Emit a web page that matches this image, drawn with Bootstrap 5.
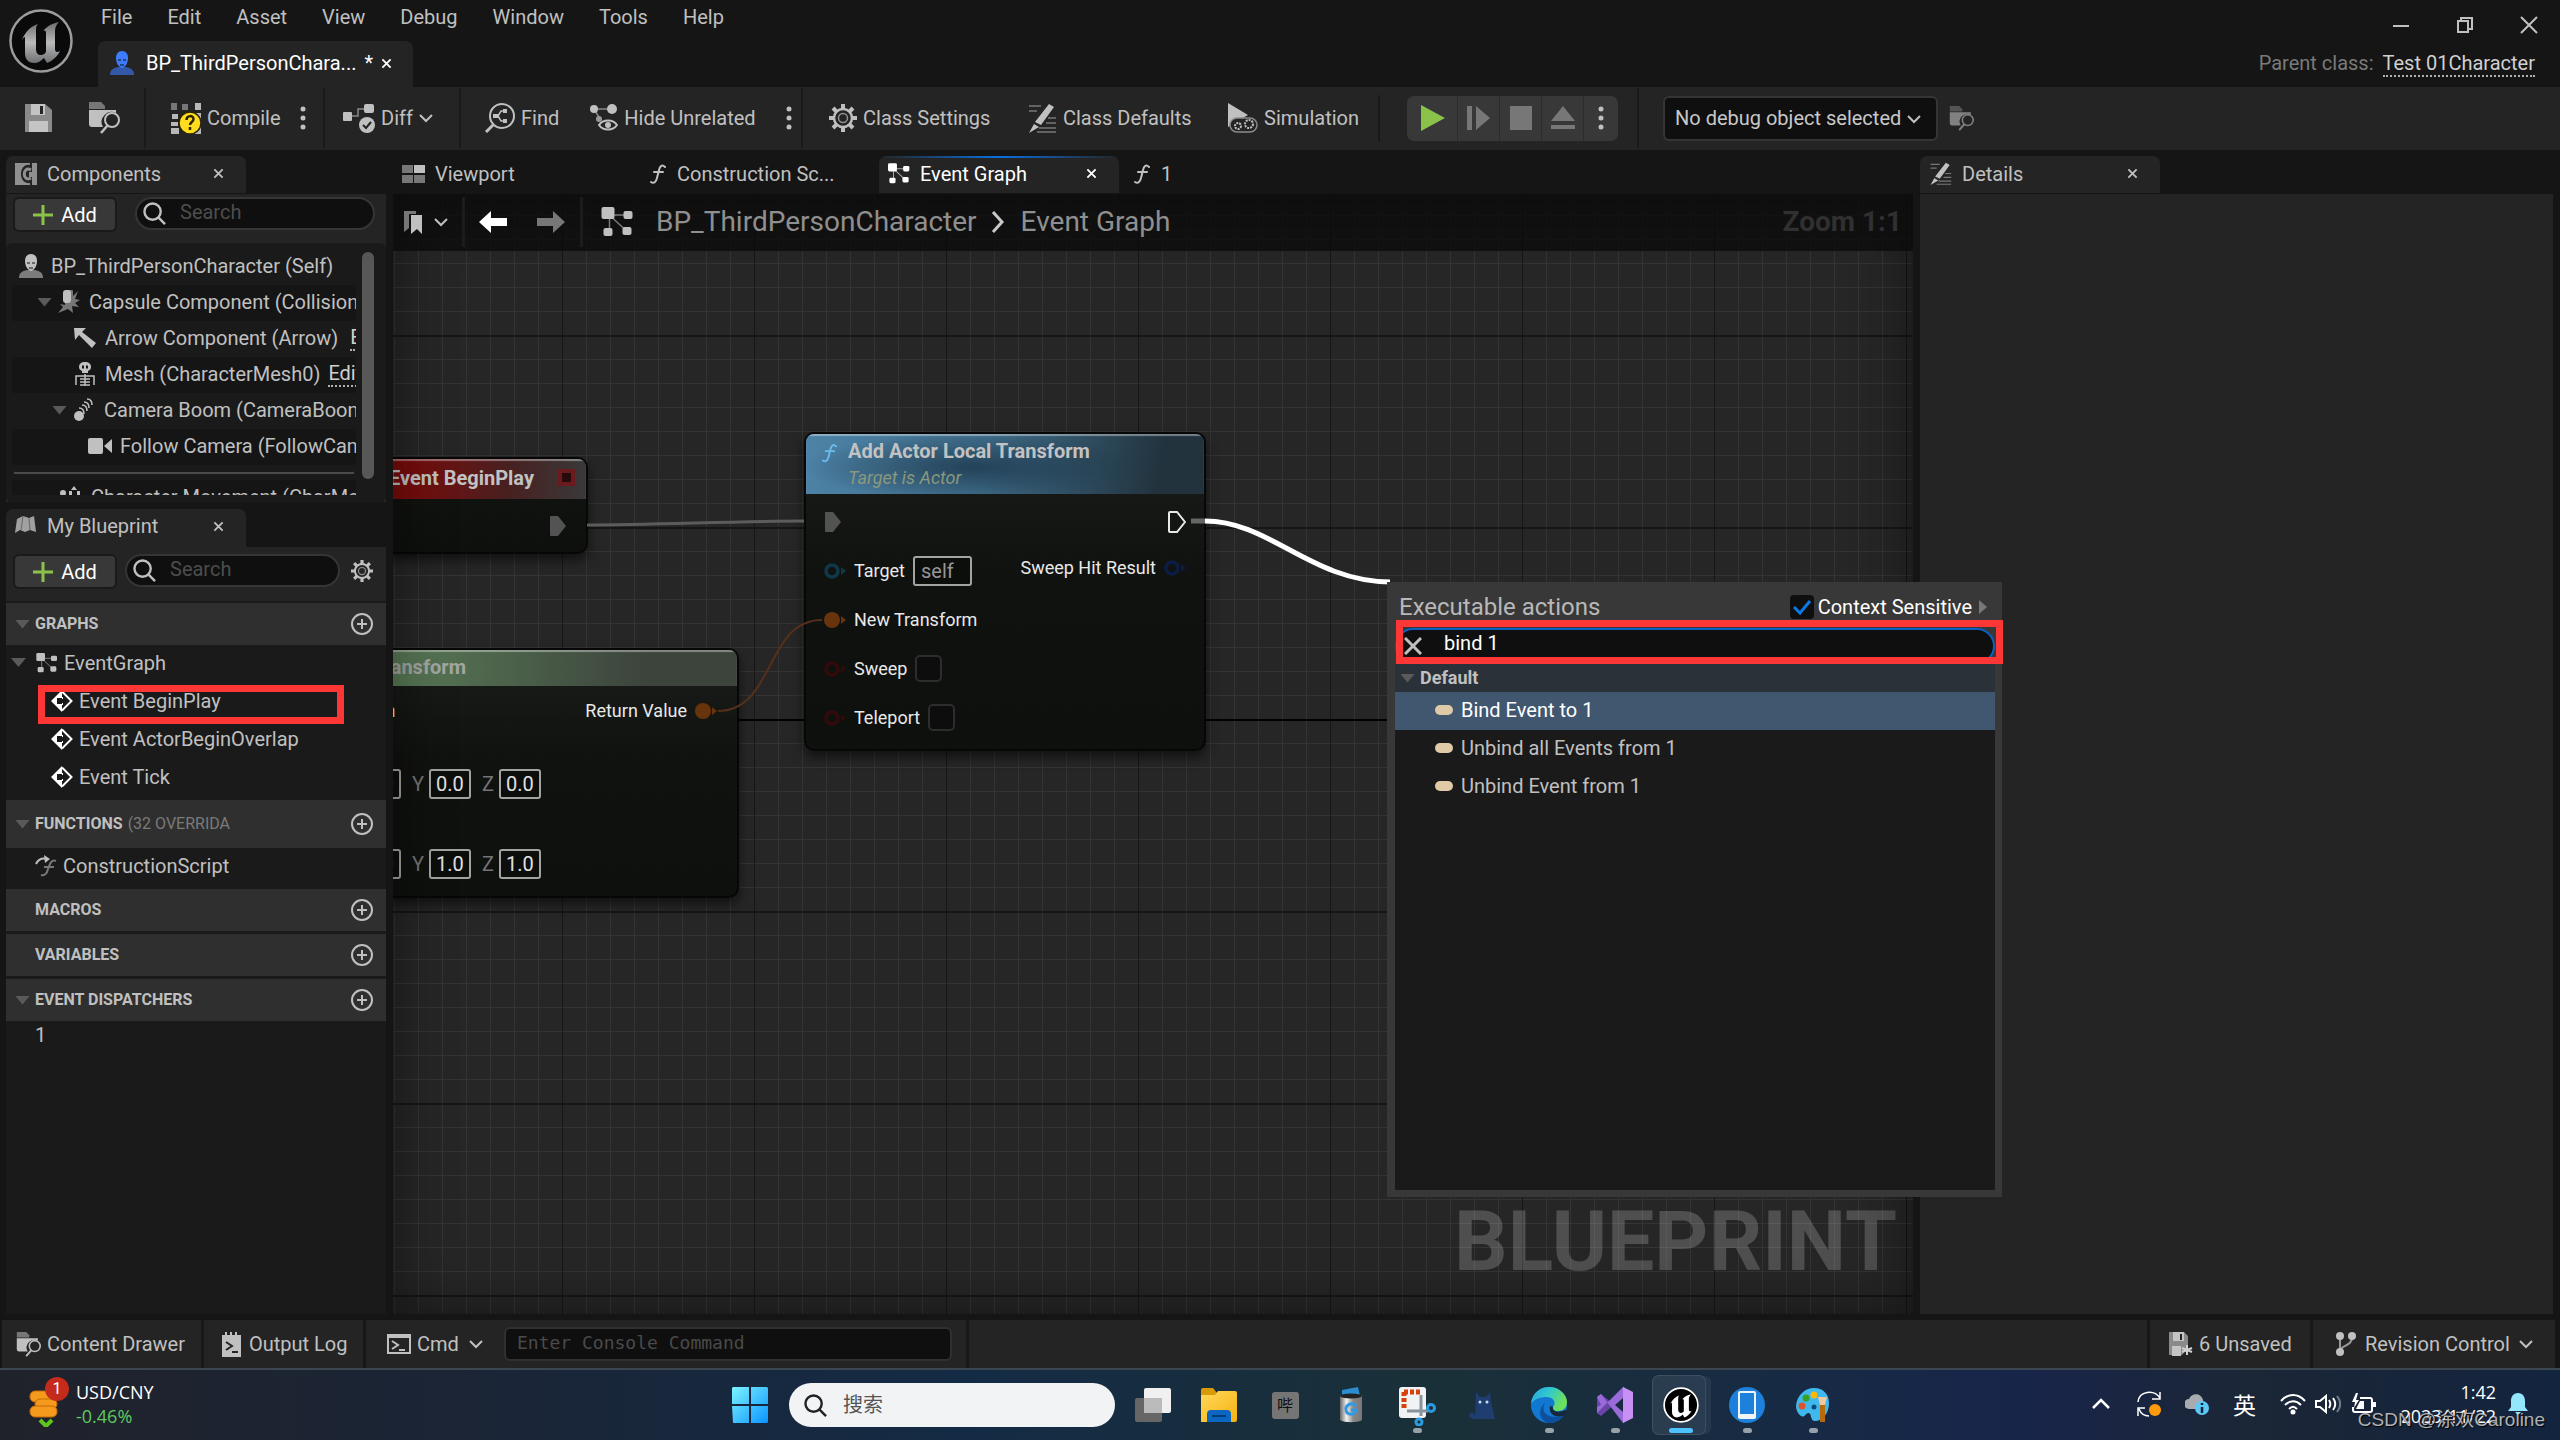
<!DOCTYPE html>
<html lang="en">
<head>
<meta charset="utf-8">
<meta name="viewport" content="width=device-width, initial-scale=1">
<title>BP_ThirdPersonCharacter</title>
<link rel="stylesheet" href="https://cdn.jsdelivr.net/npm/bootstrap@5.3.0/dist/css/bootstrap.min.css">
<script src="https://cdn.jsdelivr.net/npm/bootstrap@5.3.0/dist/js/bootstrap.bundle.min.js"></script>
<style>
body{font-family:Roboto,"Noto Sans CJK SC",sans-serif;font-size:20px;line-height:24px;background:#151515;color:#c0c0c0;min-height:100vh;overflow:hidden}
svg{display:block;flex:none}
button{background:none;border:0;padding:0;color:inherit;white-space:nowrap}
.nowrap{white-space:nowrap}
.tbtn{display:flex;align-items:center;gap:6px}
/* title bar */
.titlebar{height:87px}
.brand{padding:9px 25px 0 9px}
.menus{gap:35px;padding:5px 0 0 3px;height:41px}
.menus button{height:24px}
.apptab{width:315px;height:46px;background:#242424;border-radius:7px 7px 0 0;color:#fff;padding:0 20px 2px 12px;gap:8px}
.wctl{gap:46px;padding:16px 22px 0 0;height:51px}
.parentcls{padding-right:25px;gap:9px;color:#7a7a7a}
.parentcls a,.editlink{color:#d0d0d0;text-decoration:none;border-bottom:2px dotted #b0b0b0}
/* toolbar */
.toolbar{height:63px;background:#242424}
.tgroup{display:flex;align-items:center;justify-content:space-between;border-right:2px solid #1a1a1a;margin:1px 0 2px}
.playset{width:211px;height:45px;background:#383838;border-radius:7px;overflow:hidden}
.playset button{flex:1;height:45px;display:flex;align-items:center;justify-content:center;border-right:1px solid #2c2c2c}
.playset button:first-child{flex:0 0 51px}
.playset button:last-child{border:0;flex:0 0 34px}
.dbgsel{width:275px;height:45px;background:#0f0f0f url("data:image/svg+xml,%3Csvg xmlns='http://www.w3.org/2000/svg' width='14' height='14'%3E%3Cpath d='M1 4l6 6 6-6' fill='none' stroke='%23c0c0c0' stroke-width='2'/%3E%3C/svg%3E") no-repeat right 15px center;border:2px solid #353535;border-radius:6px;color:#c8c8c8;padding:0 0 2px 10px;appearance:none}
/* docked tabs */
.dtab{height:37px;display:flex;align-items:center;gap:10px;padding:0 22px 2px 9px}
.dtab.on{background:#242424;border-radius:7px 7px 0 0}
.dtab.cur{color:#fff;background:linear-gradient(90deg,#242424,#0a6fe0 50%,#242424) top/100% 2px no-repeat #242424}
.cross{margin-left:auto}
.leftcol{width:393px;padding:6px 7px 6px 6px}
.graphcol{min-width:0;padding:6px 0}
.rightcol{width:647px;padding:6px 7px 6px 7px}
.panelbody{background:#242424}
.addbtn{width:104px;height:35px;flex:none;background:#383838;border:2px solid #1a1a1a;border-radius:6px;color:#fff;display:flex;align-items:center;justify-content:center;gap:8px}
.searchbox{height:33px;min-width:0;background:#0f0f0f;border:2px solid #353535;border-radius:17px;padding:0 10px 0 6px;display:flex;align-items:center;gap:14px}
.searchbox input{background:none;border:0;outline:0;color:#fff;min-width:0;width:0;flex:1;padding:0 0 4px}
.searchbox input::placeholder{color:#4d4d4d;opacity:1}
.treebox{height:259px;background:#1a1a1a;border-radius:6px;padding:6px 12px 7px 6px;gap:6px}
.treelist{overflow:hidden;width:344px}
.trow{height:36px;display:flex;align-items:center;white-space:nowrap;gap:8px;padding-bottom:2px}
.trow.alt{background:#151515}
.ind0{padding-left:6px}.ind1{padding-left:25px}.ind2{padding-left:60px}.ind3{padding-left:75px}.ind2b{padding-left:40px}
.trow .ic{width:25px;display:flex;justify-content:center;flex:none}
.tsep{height:2px;background:#4a4a4a;margin:7px 2px 6px}
.vbar{width:12px;height:227px;margin-top:3px;background:#575757;border-radius:6px}
.bphead{height:42px;background:#2f2f2f;display:flex;align-items:center;padding:0 13px 0 9px;gap:5px;font-size:16px;font-weight:700;text-transform:uppercase;margin-bottom:3px;white-space:nowrap}
.bphead.tight{margin-bottom:0}
.bphead .soft{font-weight:400;color:#7a7a7a}
.bphead button{margin-left:auto}
.tri{width:15px;height:9px;background:#5a5a5a;clip-path:polygon(0 0,100% 0,50% 100%);flex:none}
.tri.off{visibility:hidden}
.bprow{height:38px;display:flex;align-items:center;gap:6px;white-space:nowrap;padding-bottom:3px}
.bparea{background:#1a1a1a;padding-top:2px}
.redmark{position:absolute;border:7px solid #fc3735}
/* graph canvas */
.canvas{position:relative;overflow:hidden;background-color:#262626;
 background-image:linear-gradient(#161616 2px,transparent 2px),linear-gradient(90deg,#161616 1px,transparent 1px),linear-gradient(#343434 1px,transparent 1px),linear-gradient(90deg,#343434 1px,transparent 1px);
 background-size:192px 192px,192px 192px,24px 24px,24px 24px;background-position:0 141px,169px 0,0 21px,1px 0}
.canvas::after{content:"";position:absolute;inset:0;box-shadow:inset 0 0 60px rgba(0,0,0,.45);pointer-events:none}
.originline{position:absolute;left:0;right:0;top:525px;height:2px;background:#000}
.crumbs{position:absolute;left:0;right:0;top:0;height:57px;background:rgba(10,10,10,.78);z-index:2;color:#8f8f8f;font-size:28px;line-height:32px;padding:0 11px 2px 11px}
.crumbs .vsep{width:3px;height:50px;background:#1c1c1c}
.zoomtxt{font-size:28px;font-weight:700;color:#303030}
.bigmark{position:absolute;right:16px;bottom:16px;font-size:84px;line-height:112px;font-weight:700;color:#fff;opacity:.19}
.wires{position:absolute;left:0;top:0}
.gnode{position:absolute;border:2px solid #060606;border-radius:10px;background:linear-gradient(#1b1d1a,#10120f 45%,#0e100d);box-shadow:0 6px 12px rgba(0,0,0,.55);overflow:hidden;color:#f0f0f0;font-size:18px;opacity:.97}
.ghead{font-size:20px;font-weight:700;color:#c8c8c8;box-shadow:inset 0 2px 1px rgba(255,255,255,.4)}
.gh-red{background:linear-gradient(90deg,#7c0c0c 55%,#4a2020 80%,#3a3a3a);height:40px;padding-bottom:3px}
.gh-green{background:linear-gradient(90deg,#5b8358,#5d805a 40%,#3d453d 85%);height:36px;color:#a8aca6;padding-bottom:2px}
.gh-blue{background:radial-gradient(ellipse 170px 34px at 42% 55%,rgba(26,52,72,.75),transparent),linear-gradient(100deg,#4f86ab 0%,#41718f 45%,#22343f 88%);height:60px;line-height:24px}
.gh-blue em{display:block;font-size:18px;font-weight:400;color:#8f9c80;line-height:30px}
.prow{height:49px;display:flex;align-items:center;gap:8px;white-space:nowrap}
.numbox{height:30px;width:42px;background:#0c0e0b;border:2px solid #a8a8a8;border-radius:3px;color:#e8e8e8;padding:0;text-align:center;font-size:20px}
.selfbox{width:59px;color:#9a9a9a;text-align:left;padding-left:6px}
.gcheck{appearance:none;width:27px;height:27px;background:#0d0d0d;border:2px solid #2e2e2e;border-radius:5px;margin:0}
.axis{color:#777;font-size:20px;width:28px;padding-left:11px}
/* action menu */
.actmenu{position:absolute;left:1387px;top:432px;width:615px;height:615px;background:#383838;padding:10px 7px 7px 8px;z-index:3}
.amtitle{font-size:24px;line-height:30px;color:#b8b8b8}
.amhead{height:30px;padding:0 8px 0 4px}
.ctx{appearance:none;width:24px;height:24px;margin:0;border-radius:4px;background:#0f0f0f url("data:image/svg+xml,%3Csvg xmlns='http://www.w3.org/2000/svg' width='24' height='24'%3E%3Cpath d='M4 12l6 6L20 6' fill='none' stroke='%230a78e8' stroke-width='3'/%3E%3C/svg%3E") center no-repeat}
.amsearch{height:36px;margin-top:6px;border:2px solid #0a5fc0;border-radius:18px;background:#0f0f0f;padding-left:7px;gap:22px}
.amsearch input{background:none;border:0;outline:0;color:#fff;flex:1;padding:0 0 6px}
.amlist{background:#1a1a1a;flex:1}
.amgroup{height:28px;background:#2b3138;padding-left:5px;gap:5px;font-size:18px;font-weight:700}
.amitem{height:38px;width:100%;padding:0 0 2px 40px;gap:8px;text-align:left}
.amitem.sel{background:#41576f;color:#fff}
.pill{width:18px;height:10px;border-radius:5px;background:#e0c9a6}
/* status bar */
.statusbar{height:48px;background:#242424;margin:0 5px 0 2px}
.sseg{display:flex;align-items:center;border-right:3px solid #181818}
.cmdbox{width:448px;height:34px;background:#0f0f0f;border:2px solid #303030;border-radius:6px;font:18px "DejaVu Sans Mono",monospace;color:#fff;padding:0 0 4px 11px}
.cmdbox::placeholder{color:#4a4a4a;opacity:1}
/* windows task bar */
.taskbar{height:72px;border-top:2px solid #3c4650;background:linear-gradient(90deg,#20222b 0%,#1a2537 20%,#142b45 38%,#1a3038 56%,#172a44 70%,#18254a 79%,#1b2636 88%,#13243f 100%);font-family:"Open Sans","Noto Sans CJK SC",sans-serif;font-size:18px;color:#fff}
.widget{width:732px;padding:0 0 2px 28px;gap:14px}
.winsearch{width:326px;height:44px;border-radius:22px;background:#f2f3f5;margin:0 5px 0 21px;padding-left:15px;gap:16px}
.winsearch input{border:0;background:none;outline:0;font-size:20px;width:240px;padding:0;color:#444}
.winsearch input::placeholder{color:#555;opacity:1}
.tapp{width:66px;height:70px;display:flex;align-items:center;justify-content:center;position:relative}
.tapp.run::after,.tapp.act::after{content:"";position:absolute;bottom:7px;width:9px;height:5px;border-radius:3px;background:#98a0a8}
.tapp.act::after{width:24px;background:#4cc2ff}
.tapp.act::before{content:"";position:absolute;left:4px;top:5px;width:54px;height:60px;border-radius:7px;background:rgba(255,255,255,.08);border:1px solid rgba(255,255,255,.1);box-shadow:6px 0 0 -1px rgba(255,255,255,.06)}
.tray{padding:0 32px 3px 0}
.clock{width:100px;text-align:right;line-height:24px;font-size:18px}
.wmark{position:absolute;right:15px;bottom:7px;font-family:"Liberation Sans","Noto Sans CJK SC",sans-serif;font-size:19px;line-height:26px;color:rgba(230,230,230,.75);text-shadow:1px 1px 1px #000}
</style>
</head>
<body class="d-flex flex-column position-relative">
<svg width="0" height="0" class="position-absolute" aria-hidden="true">
<defs>
<symbol id="i-x" viewBox="0 0 12 12"><path d="M1.500 1.500l9 9M10.500 1.500l-9 9" stroke="currentColor" stroke-width="2" fill="none"/></symbol>
<symbol id="i-chev" viewBox="0 0 14 14"><path d="M1 4l6 6 6-6" stroke="currentColor" stroke-width="2" fill="none"/></symbol>
<symbol id="i-dots" viewBox="0 0 6 24"><g fill="currentColor"><circle cx="3" cy="3" r="2.500"/><circle cx="3" cy="12" r="2.500"/><circle cx="3" cy="21" r="2.500"/></g></symbol>
<symbol id="i-save" viewBox="0 0 28 28"><path d="M1 0h20l7 6v22H1z" fill="#8a8a8a"/><path d="M7 0h14v11H7zM5 17h19v11H5z" fill="#c4c4c4"/><path d="M16 2h3v8h-3z" fill="#242424"/></symbol>
<symbol id="i-browse" viewBox="0 0 32 32"><path d="M1 0h12l4 4v3H1z" fill="#777"/><path d="M1 8h27v3a10 10 0 0 0-13 14H4a3 3 0 0 1-3-3z" fill="#c0c0c0"/><circle cx="24" cy="18" r="7" fill="none" stroke="currentColor" stroke-width="2"/><path d="M20 23l-7 8" stroke="currentColor" stroke-width="2.500"/></symbol>
<symbol id="i-f" viewBox="0 0 18 20"><path d="M16 3c-3-3-5-1-6 3L8 14c-1 4-3 6-6 4M5 8h9" fill="none" stroke="currentColor" stroke-width="2" stroke-linecap="round"/></symbol>
<symbol id="i-graph" viewBox="0 0 32 30"><path d="M8 8h20M8 8v18M10 10l15 14" stroke="currentColor" stroke-width="1.500" opacity=".6"/><g fill="currentColor"><rect width="13" height="12" rx="2"/><rect x="22" y="4" width="9" height="8" rx="2"/><rect x="2" y="21" width="9" height="8" rx="2"/><rect x="21" y="20" width="9" height="8" rx="2"/></g></symbol>
<symbol id="i-search" viewBox="0 0 24 24"><circle cx="10" cy="10" r="8.500" fill="none" stroke="currentColor" stroke-width="2.500"/><path d="M16 16l7 7" stroke="currentColor" stroke-width="2.500"/></symbol>
<symbol id="i-gear" viewBox="0 0 28 28"><circle cx="14" cy="14" r="9" fill="none" stroke="currentColor" stroke-width="2.500"/><circle cx="14" cy="14" r="4.500" fill="none" stroke="currentColor" stroke-width="1.500" opacity=".7"/><g stroke="currentColor" stroke-width="4"><path d="M14 0v5M14 23v5M0 14h5M23 14h5M4 4l4 4M20 20l4 4M4 24l4-4M20 8l4-4"/></g></symbol>
<symbol id="i-pencil" viewBox="0 0 30 30"><path d="M2 3h12M2 8h8M21 15h8M19 20h10M12 25h17M10 29h19" stroke="#777" stroke-width="1.500"/><path d="M22 1l5 3L14 22l-6-3zM7 21l5 3-10 6z" fill="currentColor"/></symbol>
<symbol id="i-plus" viewBox="0 0 20 20"><path d="M10 0v20M0 10h20" stroke="#8bc34a" stroke-width="3"/></symbol>
<symbol id="i-circ" viewBox="0 0 22 22"><circle cx="11" cy="11" r="10" fill="none" stroke="currentColor" stroke-width="2"/><path d="M11 6v10M6 11h10" stroke="currentColor" stroke-width="2"/></symbol>
<symbol id="i-person" viewBox="0 0 24 24"><path d="M0 24c0-6 4-7 8-8h8c4 1 8 2 8 8z" fill="currentColor" opacity=".6"/><path d="M12 0c4 0 6 3 6 7s-2 9-6 10c-4-1-6-6-6-10s2-7 6-7z" fill="currentColor"/><path d="M8 9h3M13 9h3M10 14h4" stroke="#111" stroke-width="1"/></symbol>
<symbol id="i-event" viewBox="0 0 22 22"><path d="M11 0L0 11l11 11v-6H11v-2H6V8h5V0z" fill="#fff"/><path d="M11 1.500l9.500 9.500-9.500 9.500M11 8h1l3 3-3 3h-1" fill="none" stroke="#fff" stroke-width="2"/><path d="M7 9h5V6l5 5-5 5v-3H7z" fill="#1a1a1a"/></symbol>
<symbol id="i-exec" viewBox="0 0 18 22"><path d="M2 1h7l8 10-8 10H2a1 1 0 0 1-1-1V2a1 1 0 0 1 1-1z"/></symbol>
<symbol id="i-pin" viewBox="0 0 22 18"><circle cx="8" cy="9" r="6" fill="none" stroke="currentColor" stroke-width="3.500"/><path d="M17 5l5 4-5 4z" fill="currentColor"/></symbol>
<symbol id="i-pinf" viewBox="0 0 22 18"><circle cx="8" cy="9" r="8" fill="currentColor"/><path d="M17 5l5 4-5 4z" fill="currentColor"/></symbol>
<symbol id="i-u" viewBox="0 0 64 64"><path d="M13 31c3-8 9-14 16-16-2 2-2 4-2 6v19c0 4 2 6 5 6 2 0 4-1 5-3V24c0-2-1-3-3-2 4-5 10-8 16-9-3 3-4 6-4 9v18c0 3 2 4 5 2-3 6-8 10-13 12l-3-5c-3 3-6 5-10 5-6 0-9-4-9-10V28c-1 0-2 1-3 3z"/></symbol>
<linearGradient id="ug" x1="0" y1="0" x2="0" y2="1"><stop offset="0" stop-color="#6a6c6e"/><stop offset=".5" stop-color="#b8babc"/><stop offset="1" stop-color="#6e7072"/></linearGradient>
<linearGradient id="wg" x1="0" y1="0" x2="1" y2="1"><stop offset="0" stop-color="#7df3ff"/><stop offset="1" stop-color="#0a94ff"/></linearGradient>
<linearGradient id="eg" x1="0" y1="0" x2="1" y2=".4"><stop offset="0" stop-color="#2a9fe0"/><stop offset=".5" stop-color="#30c8d0"/><stop offset="1" stop-color="#6ee05a"/></linearGradient>
<linearGradient id="fg" x1="0" y1="0" x2="1" y2="1"><stop offset="0" stop-color="#ffd95a"/><stop offset="1" stop-color="#f5b112"/></linearGradient>
<linearGradient id="cg" x1="0" y1="0" x2="1" y2="0"><stop offset="0" stop-color="#666"/><stop offset=".3" stop-color="#f2f2f2"/><stop offset=".6" stop-color="#888"/><stop offset="1" stop-color="#777"/></linearGradient>
</defs>
</svg>

<header class="titlebar d-flex">
  <div class="brand"><svg width="64" height="64" viewBox="0 0 64 64"><circle cx="32" cy="32" r="30.500" fill="#0a0a0a" stroke="#9a9c9e" stroke-width="2.500"/><use href="#i-u" width="64" height="64" fill="url(#ug)"/></svg></div>
  <div>
    <nav class="menus d-flex" aria-label="Main menu"><button>File</button><button>Edit</button><button>Asset</button><button>View</button><button>Debug</button><button>Window</button><button>Tools</button><button>Help</button></nav>
    <div class="apptab d-flex align-items-center"><svg width="24" height="24" class="me-1" style="color:#3d7bff"><use href="#i-person"/></svg><span class="nowrap">BP_ThirdPersonChara...</span><span>*</span><button aria-label="Close tab"><svg width="11" height="11"><use href="#i-x"/></svg></button></div>
  </div>
  <div class="ms-auto d-flex flex-column align-items-end">
    <div class="wctl d-flex align-items-start">
      <button aria-label="Minimize"><svg width="18" height="18"><path d="M1 10h16" stroke="#c0c0c0" stroke-width="2"/></svg></button>
      <button aria-label="Restore"><svg width="18" height="18" fill="none" stroke="#c0c0c0" stroke-width="2"><path d="M2 5h10v11H2zM5 5V2h11v11h-4"/></svg></button>
      <button aria-label="Close"><svg width="18" height="18" stroke="#c0c0c0" stroke-width="2"><path d="M1 1l16 16M17 1L1 17"/></svg></button>
    </div>
    <div class="parentcls d-flex"><span>Parent class:</span><a href="#">Test 01Character</a></div>
  </div>
</header>

<div class="toolbar d-flex">
  <div class="tgroup" style="width:146px;padding:0 24px">
    <button aria-label="Save"><svg width="28" height="28"><use href="#i-save"/></svg></button>
    <button aria-label="Browse"><svg width="32" height="32"><use href="#i-browse"/></svg></button>
  </div>
  <div class="tgroup" style="width:179px;padding:0 17px 0 24px">
    <button class="tbtn"><svg width="31" height="31"><g fill="#777"><path d="M1 0h6v7H1zM12 1h6v6h-6z"/></g><path d="M25 0h6v7h-6zM13 11h5v6h-5zM2 11h6v5H2zM24 10h7v8h-7zM1 19h7v4H1zM1 25h8v6H1zM24 24h7v7h-7z" fill="#b8b8b8"/><circle cx="20" cy="20" r="11" fill="#ffdc1e" stroke="#2a2400" stroke-width="1.500"/><path d="M16.500 17c0-5 7-5 7-1 0 3-3.500 3-3.500 6M20 24v3" stroke="#2a2400" stroke-width="2.500" fill="none"/></svg>Compile</button>
    <button aria-label="Compile options"><svg width="6" height="24"><use href="#i-dots"/></svg></button>
  </div>
  <div class="tgroup" style="width:136px;padding:0 26px 0 18px">
    <button class="tbtn"><svg width="32" height="30"><path d="M8 13h7V6h6" fill="none" stroke="#888" stroke-width="1.500"/><g fill="#c0c0c0"><rect y="9" width="9" height="9" rx="1"/><rect x="21" y="1" width="10" height="9" rx="2"/><circle cx="24" cy="22" r="8"/></g><path d="M20 22l3 3 5-6" stroke="#242424" stroke-width="2" fill="none"/></svg>Diff</button>
    <svg width="14" height="14"><use href="#i-chev"/></svg>
  </div>
  <div class="tgroup justify-content-start" style="width:342px;padding:0 16px 0 24px;gap:30px">
    <button class="tbtn"><svg width="30" height="30" fill="none" stroke="#c0c0c0"><circle cx="17" cy="13" r="12" stroke-width="2"/><path d="M8 22l-7 7" stroke-width="3"/><path d="M10 13h3l3-5h5M13 13l3 5h5" stroke-width="1.500"/><path d="M8 11h5v4H8zM18 6h4v4h-4zM18 16h4v4h-4z" fill="#c0c0c0" stroke="none"/></svg>Find</button>
    <button class="tbtn"><svg width="29" height="28"><path d="M5 5h18M5 5l6 10" stroke="#888" stroke-width="1.500"/><circle cx="5" cy="5" r="4" fill="#c0c0c0"/><circle cx="23" cy="5" r="5" fill="#c0c0c0"/><circle cx="10" cy="15" r="3" fill="#999"/><path d="M10 21c4-6 14-6 18 0-4 6-14 6-18 0z" fill="none" stroke="#c0c0c0" stroke-width="2"/><circle cx="19" cy="21" r="3" fill="#c0c0c0"/></svg>Hide Unrelated</button>
    <button aria-label="Hide options" class="position-relative ms-auto me-0" style="flex:none;margin-left:-10px"><svg width="6" height="24"><use href="#i-dots"/></svg></button>
  </div>
  <div class="tgroup my-2" style="width:577px;padding:0 19px 2px 26px">
    <button class="tbtn"><svg width="28" height="28"><use href="#i-gear"/></svg>Class Settings</button>
    <button class="tbtn"><svg width="30" height="30"><use href="#i-pencil"/></svg>Class Defaults</button>
    <button class="tbtn"><svg width="30" height="30"><path d="M0 0l20 12L0 24z" fill="#c0c0c0"/><rect x="2" y="15" width="27" height="14" rx="7" fill="#242424" stroke="#8a8a8a" stroke-width="1.500"/><circle cx="10" cy="23" r="3" fill="none" stroke="#c0c0c0" stroke-width="2" stroke-dasharray="2 1"/><circle cx="21" cy="21" r="4" fill="none" stroke="#c0c0c0" stroke-width="2" stroke-dasharray="2 1"/></svg>Simulation</button>
  </div>
  <div class="tgroup" style="width:259px;padding:0 0 0 27px">
    <div class="playset d-flex">
      <button aria-label="Play"><svg width="25" height="26"><path d="M1 0l24 13L1 26z" fill="#8bc34a"/></svg></button>
      <button aria-label="Step"><svg width="23" height="24" fill="#777"><path d="M0 0h5v24H0zM9 0l14 12L9 24z"/></svg></button>
      <button aria-label="Stop"><svg width="22" height="24"><path d="M0 0h22v24H0z" fill="#777"/></svg></button>
      <button aria-label="Eject"><svg width="24" height="24" fill="#777"><path d="M12 0l12 15H0zM0 19h24v4H0z"/></svg></button>
      <button aria-label="Play options"><svg width="6" height="26"><use href="#i-dots"/></svg></button>
    </div>
  </div>
  <div class="d-flex align-items-center" style="padding-left:24px;gap:11px">
    <select class="dbgsel" aria-label="Debug object"><option>No debug object selected</option></select>
    <svg width="25" height="25" opacity=".6"><use href="#i-browse"/></svg>
  </div>
</div>

<main class="d-flex flex-grow-1 position-relative">
  <aside class="leftcol d-flex flex-column">
    <div class="dtab on" style="width:240px"><svg width="22" height="22"><path d="M0 0h15v2C3 0 3 22 15 20v2H0zM17 0h5v22h-5v-8h-3V9h3z" fill="#909090"/><path d="M16 7c-9-5-9 13 0 8" fill="none" stroke="#909090" stroke-width="3"/></svg>Components<button class="cross" aria-label="Close Components"><svg width="11" height="11"><use href="#i-x"/></svg></button></div>
    <div class="panelbody d-flex" style="height:49px;margin-top:1px;padding:3px 11px 0 7px;gap:18px">
      <button class="addbtn"><svg width="20" height="20"><use href="#i-plus"/></svg>Add</button>
      <div class="searchbox flex-grow-1"><svg width="23" height="23"><use href="#i-search"/></svg><input type="text" placeholder="Search" aria-label="Search components"></div>
    </div>
    <div class="panelbody"><div class="treebox d-flex">
      <div class="treelist">
        <div class="trow ind0"><span class="ic"><svg width="24" height="24"><use href="#i-person"/></svg></span><span>BP_ThirdPersonCharacter (Self)</span></div>
        <div class="trow alt ind1" style="gap:4px"><span class="tri"></span><span class="ic"><svg width="24" height="24"><path d="M1 23l5-6-3-3 5 1V2a4 4 0 0 1 8 0v4l5-5-3 8 5 1-5 3 4 4-7-1 1 7-5-4z" fill="#777"/><rect x="6" width="8" height="13" rx="3" fill="#c0c0c0"/></svg></span><span class="ms-1">Capsule Component (CollisionCylinder)</span></div>
        <div class="trow ind2"><span class="ic"><svg width="24" height="24"><path d="M1 2h12l-4 4 14 11-4 5L6 9l-4 5z" fill="#c0c0c0"/></svg></span><span>Arrow Component (Arrow)</span><a href="#" class="editlink ms-1">Edit in C++</a></div>
        <div class="trow alt ind2"><span class="ic"><svg width="20" height="24" fill="none" stroke="#c0c0c0" stroke-width="1.500"><path d="M10 0c4 0 6 2 6 5 0 2-1 3-3 4v2H7V9C5 8 4 7 4 5c0-3 2-5 6-5z" fill="#c0c0c0" stroke="none"/><path d="M1 23v-9h18v9M10 12v12M5 17h10M5 20h10M5 23h10"/><path d="M7 5h2M11 5h2" stroke="#151515" stroke-width="3"/></svg></span><span>Mesh (CharacterMesh0)</span><a href="#" class="editlink">Edit in C++</a></div>
        <div class="trow ind2b" style="gap:4px"><span class="tri"></span><span class="ic"><svg width="20" height="24" fill="none" stroke="#c0c0c0" stroke-width="1.500"><circle cx="5" cy="18" r="5" fill="#c0c0c0" stroke="none"/><path d="M5 10c4 0 5 3 5 6M8 7c4 0 5 3 5 6M10 4c4 0 5 3 5 6M13 1c4 0 5 3 5 6"/></svg></span><span class="ms-1">Camera Boom (CameraBoom)</span></div>
        <div class="trow alt ind3"><span class="ic"><svg width="24" height="16"><path d="M0 2a2 2 0 0 1 2-2h11a2 2 0 0 1 2 2v12a2 2 0 0 1-2 2H2a2 2 0 0 1-2-2zM16 8l8-7v14z" fill="#c0c0c0"/></svg></span><span>Follow Camera (FollowCamera)</span></div>
        <div class="tsep"></div>
        <div class="trow alt" style="padding-left:46px"><span class="ic"><svg width="24" height="24" fill="#c0c0c0"><circle cx="4" cy="8" r="3"/><path d="M15 1l3 4h-6zM10 6h3v8h-3zM18 6h3v8h-3z"/></svg></span><span>Character Movement (CharMoveComp)</span></div>
      </div>
      <div class="vbar"></div>
    </div></div>
    <div class="dtab on" style="width:240px;height:38px;margin-top:7px;padding-bottom:4px"><svg width="22" height="22"><path d="M2 4l6-3 6 2 5-2 2 16-6-2-5 2-5-2-5 3z" fill="#a0a0a0"/><path d="M8 1L6 15M14 3l1 12" stroke="#666" stroke-width="1"/></svg>My Blueprint<button class="cross" aria-label="Close My Blueprint"><svg width="11" height="11"><use href="#i-x"/></svg></button></div>
    <div class="panelbody d-flex" style="height:54px;padding:7px 13px 0 7px;gap:8px">
      <button class="addbtn"><svg width="20" height="20"><use href="#i-plus"/></svg>Add</button>
      <div class="searchbox flex-grow-1" style="margin-right:3px"><svg width="23" height="23"><use href="#i-search"/></svg><input type="text" placeholder="Search" aria-label="Search blueprint"></div>
      <button aria-label="View options" style="height:33px"><svg width="22" height="22"><use href="#i-gear"/></svg></button>
    </div>
    <div class="bparea flex-grow-1">
      <div class="bphead tight"><span class="tri"></span>Graphs<button aria-label="Add graph"><svg width="22" height="22"><use href="#i-circ"/></svg></button></div>
      <div class="bprow" style="padding-left:5px"><span class="tri"></span><svg width="22" height="20" class="ms-1"><use href="#i-graph"/></svg>EventGraph</div>
      <div class="bprow" style="padding-left:45px"><svg width="22" height="22"><use href="#i-event"/></svg>Event BeginPlay</div>
      <div class="bprow" style="padding-left:45px"><svg width="22" height="22"><use href="#i-event"/></svg>Event ActorBeginOverlap</div>
      <div class="bprow" style="padding-left:45px;margin-bottom:3px"><svg width="22" height="22"><use href="#i-event"/></svg>Event Tick</div>
      <div class="bphead tight" style="height:48px"><span class="tri"></span>Functions <span class="soft">(32 Overrida</span><button aria-label="Add function"><svg width="22" height="22"><use href="#i-circ"/></svg></button></div>
      <div class="bprow" style="padding-left:29px;margin-bottom:3px"><svg width="22" height="22" fill="none"><path d="M1 9c3-6 7-6 11-5" stroke="#c0c0c0" stroke-width="2"/><path d="M9 0l6 4-5 4z" fill="#c0c0c0"/><path d="M21 6c-4-2-6 2-8 8-1 5-4 7-7 6M9 12h10" stroke="#777" stroke-width="2"/></svg>ConstructionScript</div>
      <div class="bphead"><span class="tri off"></span>Macros<button aria-label="Add macro"><svg width="22" height="22"><use href="#i-circ"/></svg></button></div>
      <div class="bphead"><span class="tri off"></span>Variables<button aria-label="Add variable"><svg width="22" height="22"><use href="#i-circ"/></svg></button></div>
      <div class="bphead tight"><span class="tri"></span>Event Dispatchers<button aria-label="Add event dispatcher"><svg width="22" height="22"><use href="#i-circ"/></svg></button></div>
      <div style="padding:2px 0 0 29px">1</div>
    </div>
  </aside>

  <section class="graphcol flex-grow-1 d-flex flex-column">
    <div class="d-flex" style="margin-bottom:1px">
      <div class="dtab" style="width:247px"><svg width="23" height="18"><path d="M0 0h11v8H0zM0 10h11v8H0zM12 10h11v8H12z" fill="#777"/><path d="M12 0h11v8H12z" fill="#c0c0c0"/></svg>Viewport</div>
      <div class="dtab" style="width:239px"><svg width="18" height="20"><use href="#i-f"/></svg>Construction Sc...</div>
      <div class="dtab on cur" style="width:240px"><svg width="22" height="21"><use href="#i-graph"/></svg>Event Graph<button class="cross" aria-label="Close Event Graph"><svg width="11" height="11"><use href="#i-x"/></svg></button></div>
      <div class="dtab" style="padding-left:14px"><svg width="18" height="20"><use href="#i-f"/></svg><span>1</span></div>
    </div>
    <div class="canvas flex-grow-1">
      <div class="originline"></div>
      <div class="bigmark">BLUEPRINT</div>
      <div class="crumbs d-flex align-items-center">
        <button aria-label="Bookmarks" class="tbtn" style="gap:11px"><svg width="19" height="24"><path d="M0 1h12v3H5v14l-5 4z" fill="#777"/><path d="M7 5h11v19l-5-5-6 5z" fill="#c0c0c0"/></svg><svg width="14" height="14" style="color:#c0c0c0"><use href="#i-chev"/></svg></button>
        <span class="vsep" style="margin:0 14px"></span>
        <button aria-label="Back"><svg width="28" height="22"><path d="M0 11L12 0v7h16v8H12v7z" fill="#fff"/></svg></button>
        <button aria-label="Forward" style="margin-left:30px"><svg width="28" height="22"><path d="M28 11L16 0v7H0v8h16v7z" fill="#777"/></svg></button>
        <span class="vsep" style="margin:0 18px 0 15px"></span>
        <svg width="33" height="30" style="color:#c0c0c0"><use href="#i-graph"/></svg>
        <span style="margin:0 14px 0 22px">BP_ThirdPersonCharacter</span>
        <svg width="14" height="22" fill="none" stroke="#c8c8c8" stroke-width="3"><path d="M2 1l9 10-9 10"/></svg>
        <span style="margin-left:16px">Event Graph</span>
        <span class="zoomtxt ms-auto">Zoom 1:1</span>
      </div>
      <div class="gnode" style="left:-200px;top:263px;width:395px;height:97px">
        <div class="ghead gh-red d-flex align-items-center justify-content-end" style="padding-right:11px;gap:24px"><span>Event BeginPlay</span><svg width="17" height="17"><rect x="2" y="2" width="13" height="13" fill="#2a0a0a" stroke="#6e1a1e" stroke-width="4"/></svg></div>
        <div class="d-flex justify-content-end" style="padding:16px 19px"><svg width="18" height="22" fill="#555"><use href="#i-exec"/></svg></div>
      </div>
      <div class="gnode" style="left:-250px;top:454px;width:596px;height:250px">
        <div class="ghead gh-green d-flex align-items-center justify-content-end" style="padding-right:271px">Make Transform</div>
        <div class="d-flex justify-content-end align-items-center" style="height:50px;padding-right:20px;gap:8px"><span style="margin-right:182px">Location</span><span>Return Value</span><svg width="22" height="18" style="color:#6b350c"><use href="#i-pinf"/></svg></div>
        <div class="d-flex align-items-center justify-content-end" style="margin:33px 196px 50px 0"><span class="axis">X</span><input class="numbox" value="0.0" aria-label="Location X"><span class="axis">Y</span><input class="numbox" value="0.0" aria-label="Location Y"><span class="axis">Z</span><input class="numbox" value="0.0" aria-label="Location Z"></div>
        <div class="d-flex align-items-center justify-content-end" style="margin-right:196px"><span class="axis">X</span><input class="numbox" value="1.0" aria-label="Scale X"><span class="axis">Y</span><input class="numbox" value="1.0" aria-label="Scale Y"><span class="axis">Z</span><input class="numbox" value="1.0" aria-label="Scale Z"></div>
      </div>
      <div class="gnode" style="left:411px;top:238px;width:402px;height:319px">
        <div class="ghead gh-blue d-flex" style="padding:5px 0 0 15px;gap:10px"><svg width="17" height="20" style="color:#6cc0f5;margin-top:4px"><use href="#i-f"/></svg><div>Add Actor Local Transform<em>Target is Actor</em></div></div>
        <div class="d-flex justify-content-between" style="padding:3px 18px 0 18px">
          <div>
            <div class="prow"><svg width="18" height="22" fill="#555"><use href="#i-exec"/></svg></div>
            <div class="prow"><svg width="22" height="18" style="color:#0f3a4a"><use href="#i-pin"/></svg><label for="tgt">Target</label><input id="tgt" class="numbox selfbox" value="self"></div>
            <div class="prow"><svg width="22" height="18" style="color:#6b350c"><use href="#i-pinf"/></svg>New Transform</div>
            <div class="prow"><svg width="22" height="18" style="color:#330a0c"><use href="#i-pin"/></svg><label for="swp">Sweep</label><input type="checkbox" id="swp" class="gcheck"></div>
            <div class="prow"><svg width="22" height="18" style="color:#330a0c"><use href="#i-pin"/></svg><label for="tlp">Teleport</label><input type="checkbox" id="tlp" class="gcheck"></div>
          </div>
          <div>
            <div class="prow justify-content-end"><svg width="18" height="22" fill="none" stroke="#f0f0f0" stroke-width="2"><use href="#i-exec"/></svg></div>
            <div class="prow" style="height:43px">Sweep Hit Result<svg width="22" height="18" style="color:#0c1c46"><use href="#i-pin"/></svg></div>
          </div>
        </div>
      </div>
      <svg class="wires" width="1520" height="1120" viewBox="393 194 1520 1120" fill="none">
        <path d="M587 525C650 525 740 521 804 521" stroke="#5c5c5c" stroke-width="3"/>
        <path d="M718 711C775 711 765 620 822 620" stroke="#55301a" stroke-width="2"/>
        <path d="M1191 521h14" stroke="#666" stroke-width="5"/>
        <path d="M1205 521C1270 521 1310 581 1390 582" stroke="#fff" stroke-width="5"/>
      </svg>
    </div>
  </section>

  <aside class="rightcol d-flex flex-column">
    <div class="dtab on" style="width:240px"><svg width="23" height="23"><use href="#i-pencil"/></svg>Details<button class="cross" aria-label="Close Details"><svg width="11" height="11"><use href="#i-x"/></svg></button></div>
    <div class="panelbody flex-grow-1" style="margin-top:1px"></div>
  </aside>

  <div class="actmenu d-flex flex-column">
    <div class="amhead d-flex align-items-center">
      <span class="amtitle me-auto">Executable actions</span>
      <input type="checkbox" class="ctx" id="ctx" checked><label for="ctx" class="text-white" style="margin:0 7px 0 4px">Context Sensitive</label>
      <svg width="8" height="14"><path d="M0 0l8 7-8 7z" fill="#777"/></svg>
    </div>
    <div class="amsearch d-flex align-items-center"><button aria-label="Clear search"><svg width="18" height="18" stroke="#c0c0c0" stroke-width="3"><path d="M1 1l16 16M17 1L1 17"/></svg></button><input type="text" value="bind 1" aria-label="Search actions"></div>
    <div class="amlist">
      <div class="amgroup d-flex align-items-center"><span class="tri"></span>Default</div>
      <button class="amitem sel d-flex align-items-center"><span class="pill"></span>Bind Event to 1</button>
      <button class="amitem d-flex align-items-center"><span class="pill"></span>Unbind all Events from 1</button>
      <button class="amitem d-flex align-items-center"><span class="pill"></span>Unbind Event from 1</button>
    </div>
  </div>
  <div class="redmark" style="left:1396px;top:470px;width:607px;height:44px;z-index:4"></div>
  <div class="redmark" style="left:38px;top:535px;width:306px;height:39px"></div>
</main>

<footer class="statusbar d-flex">
  <div class="sseg" style="width:202px;padding-left:14px"><button class="tbtn"><svg width="25" height="25"><use href="#i-browse"/></svg>Content Drawer</button></div>
  <div class="sseg" style="width:162px;padding-left:18px"><button class="tbtn" style="gap:8px"><svg width="19" height="25"><path d="M0 3h3V0h2v3h3V0h2v3h3V0h2v3h4v22H0z" fill="#c0c0c0"/><path d="M4 10l6 4-6 4M10 20h6" stroke="#242424" stroke-width="2" fill="none"/></svg>Output Log</button></div>
  <div class="sseg" style="width:603px;padding:0 14px 0 21px"><button class="tbtn me-auto"><svg width="24" height="20"><path d="M1 1h22v18H1z" fill="none" stroke="#c0c0c0" stroke-width="2"/><path d="M0 0h24v4H0z" fill="#c0c0c0"/><path d="M5 7l6 4-6 4M12 16h6" stroke="#c0c0c0" stroke-width="2" fill="none"/></svg>Cmd <svg width="14" height="14" class="ms-1"><use href="#i-chev"/></svg></button><input class="cmdbox" type="text" placeholder="Enter Console Command" aria-label="Console command"></div>
  <div class="sseg flex-grow-1"></div>
  <div class="sseg" style="width:163px;padding-left:18px"><button class="tbtn"><svg width="25" height="24"><path d="M1 0h15l4 4v12l-6 7H1z" fill="#8a8a8a"/><path d="M5 0h11v9H5zM4 14h9v10H4z" fill="#c4c4c4"/><path d="M12 2h2v6h-2z" fill="#242424"/><path d="M19 13v10M14 16l10 4M24 16l-10 4" stroke="#d0d0d0" stroke-width="2"/></svg>6 Unsaved</button></div>
  <div class="d-flex align-items-center" style="width:242px;padding-left:22px"><button class="tbtn" style="gap:8px"><svg width="22" height="24"><path d="M5 5v14c0-6 12-4 12-14" fill="none" stroke="#999" stroke-width="2"/><g fill="#c0c0c0"><circle cx="5" cy="4" r="4"/><circle cx="17" cy="4" r="4"/><circle cx="5" cy="20" r="4"/></g></svg>Revision Control<svg width="16" height="14"><use href="#i-chev"/></svg></button></div>
</footer>

<div class="taskbar d-flex align-items-center">
  <div class="widget d-flex align-items-center">
    <svg width="34" height="46"><g fill="#f59a1c" stroke="#c46a08"><rect x="2" y="10" width="24" height="11" rx="5"/><rect x="7" y="18" width="22" height="10" rx="5"/><rect x="2" y="25" width="27" height="11" rx="5"/></g><path d="M12 39l6 6 6-6" stroke="#5fc41c" stroke-width="4" fill="none"/></svg>
    <div style="line-height:24px">USD/CNY<br><span style="color:#5fc95f">-0.46%</span></div>
  </div>
  <button aria-label="Start"><svg width="36" height="36"><path d="M1 0h16v17H0V1zM19 0h16l1 1v16H19zM0 19h17v17H1zM19 19h17v16l-1 1H19z" fill="url(#wg)"/></svg></button>
  <div class="winsearch d-flex align-items-center"><svg width="23" height="23" style="color:#222"><use href="#i-search"/></svg><input type="text" placeholder="搜索" aria-label="搜索"></div>
  <button class="tapp" aria-label="Task view"><svg width="36" height="34"><rect y="10" width="27" height="24" rx="2" fill="#666"/><rect x="9" width="27" height="25" rx="2" fill="#f0f0f0"/><path d="M9 10h18v15H9z" fill="#bbb"/></svg></button>
  <button class="tapp" aria-label="Explorer"><svg width="36" height="34"><path d="M0 2a2 2 0 0 1 2-2h10l4 5v4H0z" fill="#d99a08"/><path d="M0 7h14l3-4h17a2 2 0 0 1 2 2v27a2 2 0 0 1-2 2H0z" fill="url(#fg)"/><path d="M6 34V26a4 4 0 0 1 4-4h16a4 4 0 0 1 4 4v8z" fill="#0a66c0"/><path d="M11 28h14" stroke="#053a78" stroke-width="2"/></svg></button>
  <button class="tapp" aria-label="Bilibili"><span style="width:27px;height:27px;background:#757575;border-radius:3px;color:#111;font-size:16px;line-height:27px">哔</span></button>
  <button class="tapp" aria-label="Geek Uninstaller"><svg width="26" height="36"><path d="M4 3l16-3 2 9H4z" fill="#2d8bd0"/><path d="M2 8c4 2 18 2 22 0v25c-4 3-18 3-22 0z" fill="url(#cg)"/><ellipse cx="13" cy="9" rx="11" ry="2.500" fill="#222"/><path d="M18 19c-5-5-11 0-10 4 1 6 10 5 10 0h-5" fill="none" stroke="#2f9be8" stroke-width="3"/></svg></button>
  <button class="tapp run" aria-label="Snipping Tool"><svg width="38" height="42"><rect x="1" y="3" width="27" height="31" rx="3" fill="#f0f2f4"/><path d="M6 8h17M6 8v18" stroke="#d8400c" stroke-width="5" stroke-dasharray="4 2" fill="none"/><path d="M23 11v21M9 27h21" stroke="#8a929a" stroke-width="3"/><g fill="none" stroke="#2a9be0" stroke-width="3"><circle cx="33" cy="24" r="3.500"/><ellipse cx="21" cy="38" rx="3" ry="3"/></g></svg></button>
  <button class="tapp" aria-label="Cat"><svg width="28" height="30"><path d="M7 2l4 5h6l4-5 1 10 4 17H5c-6-1-6-6-2-7l3 3z" fill="#1f3d70"/><circle cx="11" cy="12" r="1.500" fill="#cde"/><circle cx="18" cy="12" r="1.500" fill="#cde"/></svg></button>
  <button class="tapp run" aria-label="Edge"><svg width="36" height="36"><circle cx="18" cy="18" r="18" fill="#1277d0"/><path d="M0 17C1 6 9 0 18 0c11 0 18 8 18 15 0 6-4 9-9 9-4 0-6-2-5-4 4-5 0-10-7-10C8 10 2 13 0 17z" fill="url(#eg)"/><path d="M14 16c-5 8 2 18 19 12-5 7-11 8-15 8-8-1-13-12-4-20z" fill="#0c4f9c"/><path d="M22 20c-1 5 6 6 12 3l2 1-2 4c-9 4-17-1-15-9z" fill="#16283c"/></svg></button>
  <button class="tapp run" aria-label="Visual Studio"><svg width="36" height="36"><path d="M0 10l4-3 22 18V10L4 29l-4-3z" fill="#6a45a8"/><path d="M0 10l4-3 22 29 10-6V6L26 0 0 26l0-6 4-2z" fill="#9a6ad8"/><path d="M26 0l10 5v26l-10 5z" fill="#c890f5"/><path d="M26 11v14l-8-7z" fill="#172a40"/></svg></button>
  <button class="tapp act" aria-label="Unreal Editor"><svg width="36" height="36" viewBox="0 0 64 64" class="position-relative"><circle cx="32" cy="32" r="30" fill="#000" stroke="#fff" stroke-width="3"/><use href="#i-u" width="64" height="64" fill="#fff"/></svg></button>
  <button class="tapp run" aria-label="Phone Link"><svg width="36" height="36"><circle cx="18" cy="18" r="18" fill="#1c80dc"/><rect x="10" y="5" width="16" height="26" rx="1" fill="none" stroke="#f0f4f8" stroke-width="2"/><path d="M9 27h18v4H9z" fill="#f0f4f8"/></svg></button>
  <button class="tapp run" aria-label="Paint"><svg width="36" height="36"><path d="M19 1c9 0 15 6 15 15 0 10-6 18-14 18-5 0-3-7-6-8s-4 5-8 3C3 27 1 23 1 19 2 8 10 1 19 1z" fill="#3fb8ee"/><circle cx="7" cy="19" r="3.500" fill="#e0522a"/><circle cx="11" cy="11" r="3.500" fill="#38a020"/><circle cx="19" cy="8" r="3.500" fill="#ffb800"/><circle cx="19" cy="20" r="2.500" fill="#0c4a80"/><path d="M25 17h5v18h-5z" fill="#b8690c"/><path d="M23 10h9l-2 8h-5z" fill="#f0c8a0"/></svg></button>
  <div class="tray ms-auto d-flex align-items-center">
    <svg width="18" height="12" fill="none" stroke="#fff" stroke-width="2.500"><path d="M1 10l8-8 8 8"/></svg>
    <svg width="27" height="28" fill="none" stroke="#fff" stroke-width="1.500" style="margin-left:26px"><path d="M2 12C3 1 18-1 24 8M24 2v7h-8M13 26C8 26 5 24 3 19M2 26v-8h7"/><circle cx="19" cy="20" r="6" fill="#ff9a0a" stroke="none"/></svg>
    <svg width="26" height="24" style="margin-left:22px"><path d="M4 17a5 5 0 0 1 0-10c2-6 12-7 14 1l2 9z" fill="#a8acb0"/><circle cx="17" cy="16" r="7" fill="#5cc8f8"/><path d="M17 11v2M17 15v6" stroke="#123" stroke-width="2.500"/></svg>
    <span style="font-size:23px;margin:0 24px 0 22px;line-height:30px;font-family:'Noto Sans CJK SC',sans-serif">英</span>
    <svg width="26" height="22" fill="none" stroke="#fff" stroke-width="2"><path d="M1 8c7-8 17-8 24 0M5 12c5-5 11-5 16 0M9 16c3-3 5-3 8 0"/><circle cx="13" cy="19" r="1.500" fill="#fff"/></svg>
    <svg width="26" height="20" fill="none" stroke="#fff" stroke-width="2" style="margin-left:9px"><path d="M1 7h4l6-5v16l-6-5H1zM14 6c2 3 2 5 0 8M18 4c3 4 3 8 0 12"/><path d="M22 2c4 5 4 11 0 16" opacity=".4"/></svg>
    <svg width="26" height="22" fill="none" stroke="#fff" stroke-width="2" style="margin-left:10px"><path d="M9 5h10a2 2 0 0 1 2 2v10a2 2 0 0 1-2 2H4a2 2 0 0 1-2-2v-3"/><path d="M22 9h3v5h-3zM9 8h4v8H5z" fill="#fff" stroke="none"/><path d="M5 0L1 9h3l-1 6 5-8H5l2-7z" fill="#fff" stroke="none"/></svg>
    <div class="clock" style="margin:0 12px 0 19px">1:42<br>2023/11/22</div>
    <svg width="20" height="24"><path d="M10 1c5 0 7 4 7 8v6l3 4H0l3-4V9c0-4 2-8 7-8zM7 20h6l-3 3z" fill="#93e6fb"/></svg>
  </div>
</div>
<span class="badge rounded-pill position-absolute" style="left:45px;bottom:39px;width:24px;height:24px;background:#c42b1c;padding:0;font-size:16px;line-height:24px;font-weight:400">1</span>
<div class="wmark">CSDN @涂欢Caroline</div>
</body>
</html>
